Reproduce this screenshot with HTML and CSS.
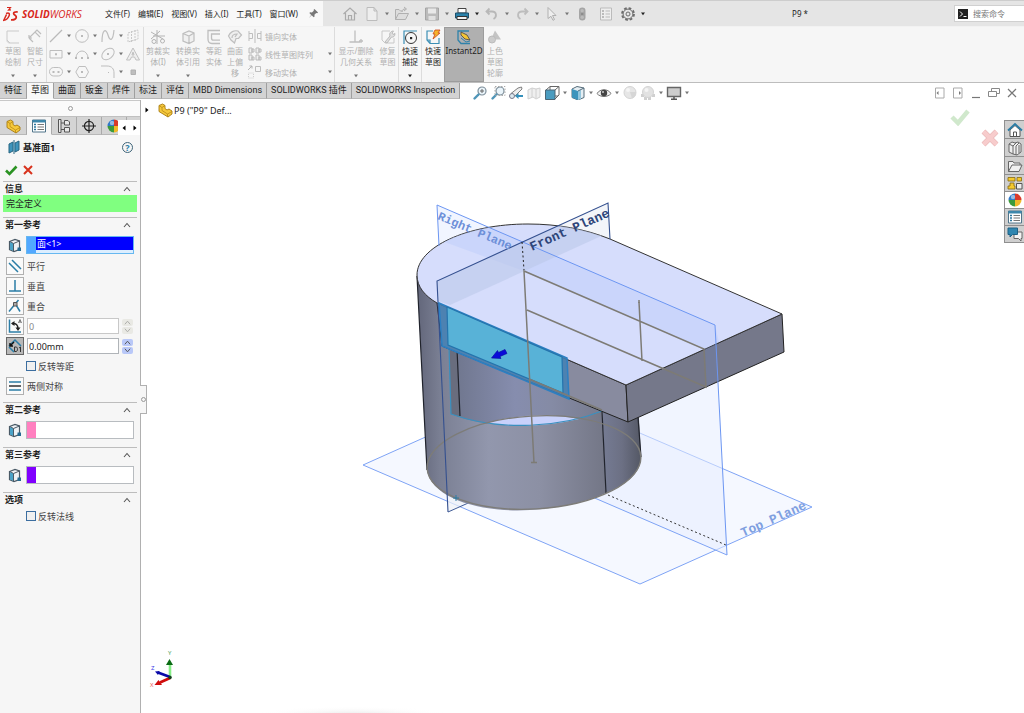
FILE: index.html
```html
<!DOCTYPE html>
<html lang="zh-CN">
<head>
<meta charset="utf-8">
<title>SOLIDWORKS - P9</title>
<link rel="stylesheet" href="styles.css">
</head>
<body>
<svg class="defs" aria-hidden="true">
  <symbol id="dn" viewBox="0 0 6 4"><path d="M1 .5h4L3 3.2z" fill="currentColor"/></symbol>
  <symbol id="chev" viewBox="0 0 10 8"><path d="M2 6l3-3.5L8 6" fill="none" stroke="#555" stroke-width="1.1"/></symbol>
  <symbol id="ref" viewBox="0 0 16 16"><path d="M2.500 4.500L8 2.500l4.500 1.500v8.500L7 14.500 2.500 12.500z" fill="#eef2f5" stroke="#4a5a66" stroke-width="1.200"/><path d="M3 5L6.500 6.500V14L3 12.500z" fill="#4aa3c8"/><path d="M3 4.500L6.500 6.500l6-2.500M6.500 6.500v8" stroke="#4a5a66" fill="none"/><path d="M10.500 10.500h3.500v3.500h-3.500z" fill="#256a90"/></symbol>
  <symbol id="part" viewBox="0 0 16 16"><path d="M2 3.500L5.500 2l2.500 1.500v3L10 8l2-1 3 2v3l-4 3-9-5.500z" fill="#f6c93c" stroke="#a67a10" stroke-width=".9"/><path d="M2 3.500l3 2v3l5.500 3.500L15 9.500M10.500 12v3M5 5.500l3-2" fill="none" stroke="#b98a18" stroke-width=".8"/></symbol>
  <symbol id="ball" viewBox="0 0 16 16"><path d="M8 8V1.500A6.500 6.500 0 0 0 1.500 8z" fill="#2f78c8"/><path d="M8 8V1.500A6.500 6.500 0 0 1 14.500 8z" fill="#d93a2b"/><path d="M8 8H1.500A6.500 6.500 0 0 0 8 14.500z" fill="#3c9a3c"/><path d="M8 8h6.500A6.500 6.500 0 0 1 8 14.500z" fill="#f0b92a"/><circle cx="6" cy="5" r="2.200" fill="#fff" opacity=".5"/></symbol>
  <symbol id="list" viewBox="0 0 16 16"><path d="M1.500 2h13v12h-13z" fill="#fff" stroke="#51758a"/><path d="M1.500 2h13v2.500h-13z" fill="#3d87ab"/><path d="M3 6.500h2M3 9h2M3 11.500h2" stroke="#2c78a0" stroke-width="1.6"/><path d="M6.500 6.500H13M6.500 9H13M6.500 11.500H13" stroke="#777"/></symbol>
  <symbol id="glass" viewBox="0 0 16 16"><circle cx="10" cy="6" r="4" fill="#eaf4fa" stroke="#7d8e99" stroke-width="1.200"/><path d="M6.500 9.500l-4 4" stroke="#4f95b8" stroke-width="2.400" stroke-linecap="round"/></symbol>
</svg>

<header class="titlebar">
  <div class="brandbar">
    <svg class="mark" viewBox="0 0 16 16" fill="none" stroke="#d8271c"><path d="M4 1.500h3.500L5.500 4 8 3.800" stroke-width="1.200"/><path d="M3 7.500c3-1 4 0 3 2.500S3 14 .8 14.300L3.500 8.500" stroke-width="1.500"/><path d="M14.800 6c-3-.3-4.800.5-4 2s3 1.500 2.500 3.500-2.500 2.600-5.300 2.400" stroke-width="1.700"/></svg>
    <span class="brand"><b>SOLID</b>WORKS</span>
    <nav class="menu" aria-label="菜单">
      <button>文件(F)</button><button>编辑(E)</button><button>视图(V)</button><button>插入(I)</button><button>工具(T)</button><button>窗口(W)</button>
    </nav>
    <svg class="pin" viewBox="0 0 12 12"><path d="M7 1l4 4-1 .6-1-.2-2 2 .2 2-1 .8L4 8l-3 3 2.500-3.500L1.500 5.500l.8-.8 2 .2 2-2L6.200 2z" fill="#777"/></svg>
  </div>
  <div class="quick">
    <button aria-label="主页"><svg class="ic" viewBox="0 0 16 16"><path d="M1.500 8L8 2l6.500 6M3.500 7v7h9V7M6.500 14V9.500h3V14" fill="none" stroke="#aaa" stroke-width="1.200"/></svg></button>
    <button class="drop first" aria-label="新建"><svg class="ic" viewBox="0 0 16 16"><path d="M3 1.500h7L13 5v9.500H3zM10 1.500V5h3" fill="#eee" stroke="#bcbcbc"/></svg><svg class="dn"><use href="#dn"/></svg></button>
    <button class="drop" aria-label="打开"><svg class="ic" viewBox="0 0 16 16"><path d="M1.500 13.500v-10H5L6.500 5h2M1.500 13.500l3-6h10l-3 6zM8 6c0-2.500 1.500-3 3.500-3M10 1l2.500 2L10 5" fill="#ddd" stroke="#b0b0b0"/></svg><svg class="dn"><use href="#dn"/></svg></button>
    <button class="drop" aria-label="保存"><svg class="ic" viewBox="0 0 16 16"><path d="M1.500 2h13v12h-13z" fill="#bbb" stroke="#a5a5a5"/><path d="M4 2.500h8v5H4z" fill="#e8e8e8"/><path d="M4.500 10h7v4h-7z" fill="#e0e0e0"/></svg><svg class="dn"><use href="#dn"/></svg></button>
    <button class="drop on" aria-label="打印"><svg class="ic" viewBox="0 0 16 16"><path d="M4 2.500h8V7H4z" fill="#fff" stroke="#444"/><path d="M1.500 7h13v5h-13z" fill="#2a82ab" stroke="#1d4f6b"/><path d="M3 10.500h10v3H3z" fill="#f4f4f4" stroke="#333"/></svg><svg class="dn"><use href="#dn"/></svg></button>
    <button class="drop" aria-label="撤消"><svg class="ic" viewBox="0 0 16 16"><path d="M5.500 2.500L2.500 5.500l3 3M3 5.500h5c5 0 5 5.500 1.500 7.500" fill="none" stroke="#b8b8b8" stroke-width="1.800"/></svg><svg class="dn"><use href="#dn"/></svg></button>
    <button class="drop" aria-label="重做"><svg class="ic" viewBox="0 0 16 16"><path d="M10.500 2.500l3 3-3 3M13 5.500H8c-5 0-5 5.500-1.500 7.500" fill="none" stroke="#bdbdbd" stroke-width="1.800"/></svg><svg class="dn"><use href="#dn"/></svg></button>
    <button class="drop" aria-label="选择"><svg class="ic" viewBox="0 0 16 16"><path d="M4 1.500l8 8H8.500l2 4-1.500.8-2-4L4 12.500z" fill="#eee" stroke="#b0b0b0"/></svg><svg class="dn"><use href="#dn"/></svg></button>
    <button aria-label="重建模型"><svg class="ic" viewBox="0 0 16 16"><rect x="5" y="1.500" width="6.500" height="13" rx="3.200" fill="#a5a5a5"/><circle cx="8.200" cy="4.700" r="1.700" fill="#bbb"/><circle cx="8.200" cy="8" r="1.300" fill="#8c8c8c"/><circle cx="8.200" cy="11.300" r="1.700" fill="#bbb"/></svg></button>
    <button class="apart" aria-label="文件属性"><svg class="ic" viewBox="0 0 16 16"><path d="M2.500 2h11v12h-11z" fill="#eee" stroke="#bbb"/><path d="M4 4h2v2H4zM4 7h2v2H4zM4 10h2v2H4z" fill="#bbb"/><path d="M7.500 5H12M7.500 8H12M7.500 11H12" stroke="#bbb"/></svg></button>
    <button class="drop on first" aria-label="选项"><svg class="ic" viewBox="0 0 16 16" fill="none" stroke="#6c6c6c"><circle cx="8" cy="8" r="6" stroke-width="1.800" stroke-dasharray="2.700 2"/><circle cx="8" cy="8" r="4.900"/><circle cx="8" cy="8" r="2"/></svg><svg class="dn"><use href="#dn"/></svg></button>
  </div>
  <div class="doctitle">P9 *</div>
  <label class="search"><svg class="cmd" viewBox="0 0 12 12"><path d="M1 1h10v10H1z" fill="#222"/><path d="M3 3.500L5.500 6 3 8.500M6.500 8.500h3" stroke="#fff" fill="none"/></svg><input type="text" placeholder="搜索命令" aria-label="搜索命令"></label>
</header>

<section class="ribbon" aria-label="草图工具">
  <div class="group lead">
    <button class="tool w22"><svg class="ic" viewBox="0 0 16 16"><path d="M14 2H2v9l3 3h9M2 11c0 2 1 3 3 3" fill="none" stroke="#c4c4c4"/></svg><span>草图<br>绘制</span><svg class="dn"><use href="#dn"/></svg></button>
    <button class="tool w22"><svg class="ic" viewBox="0 0 16 16"><path d="M2 9l6-6 5 5M2 9l4 4M8 3l2-2 4 4M2 9V6M2 9h3" fill="none" stroke="#b5b5b5" stroke-width="1.200"/></svg><span>智能<br>尺寸</span><svg class="dn"><use href="#dn"/></svg></button>
  </div>
  <div class="group shapes">
    <button class="shape" aria-label="直线"><svg class="ic" viewBox="0 0 16 16"><path d="M2 14L14 2" stroke="#b0b0b0" stroke-width="1.300"/></svg><svg class="dn"><use href="#dn"/></svg></button>
    <button class="shape" aria-label="圆"><svg class="ic" viewBox="0 0 16 16"><circle cx="8" cy="8" r="6.300" fill="none" stroke="#b5b5b5"/><path d="M7 7h2v2H7z" fill="#b0b0b0"/></svg><svg class="dn"><use href="#dn"/></svg></button>
    <button class="shape" aria-label="样条曲线"><svg class="ic" viewBox="0 0 16 16"><path d="M2 14C2 1 6 0 8 7s5 6 6-5" fill="none" stroke="#b5b5b5" stroke-width="1.200"/></svg><svg class="dn"><use href="#dn"/></svg></button>
    <button class="shape" aria-label="基准面"><svg class="ic" viewBox="0 0 16 16"><path d="M3 5l10-3v9L3 14zM6.500 3v12M10 2v12" fill="none" stroke="#c0c0c0" stroke-dasharray="2 1"/></svg></button>
    <button class="shape" aria-label="矩形"><svg class="ic" viewBox="0 0 16 16"><path d="M2 4.500h12v7.500H2z" fill="none" stroke="#b5b5b5"/><path d="M7 7.200h2v2H7z" fill="#b0b0b0"/></svg><svg class="dn"><use href="#dn"/></svg></button>
    <button class="shape" aria-label="圆弧"><svg class="ic" viewBox="0 0 16 16"><path d="M2 12a6 7 0 0 1 12 0" fill="none" stroke="#b5b5b5"/><path d="M1 11h2v2H1zM7 11h2v2H7zM13 11h2v2h-2z" fill="#b0b0b0"/></svg><svg class="dn"><use href="#dn"/></svg></button>
    <button class="shape" aria-label="椭圆"><svg class="ic" viewBox="0 0 16 16"><ellipse cx="8" cy="8" rx="7" ry="4.800" transform="rotate(-40 8 8)" fill="none" stroke="#b5b5b5"/><path d="M7 7h2v2H7z" fill="#b0b0b0"/></svg><svg class="dn"><use href="#dn"/></svg></button>
    <button class="shape" aria-label="文字"><svg class="ic" viewBox="0 0 16 16"><path d="M1.500 14L8 2l6.500 12h-3.500L9.500 11h-3L5 14zM7 9h2L8 6z" fill="#eee" stroke="#b8b8b8"/></svg></button>
    <button class="shape" aria-label="槽口"><svg class="ic" viewBox="0 0 16 16"><rect x="1.500" y="3.500" width="13" height="8.500" rx="4.200" fill="none" stroke="#b5b5b5"/><path d="M4.500 7h2v2h-2zM9.500 7h2v2h-2z" fill="#b0b0b0"/></svg><svg class="dn"><use href="#dn"/></svg></button>
    <button class="shape" aria-label="多边形"><svg class="ic" viewBox="0 0 16 16"><path d="M5 2.500h6.500L14.500 8l-3 5.500H5L1.800 8z" fill="none" stroke="#b5b5b5"/><path d="M7 7h2v2H7z" fill="#b0b0b0"/></svg></button>
    <button class="shape" aria-label="圆角"><svg class="ic" viewBox="0 0 16 16"><path d="M1 2h6c5 0 7 3 7 7v5" fill="none" stroke="#b5b5b5"/><path d="M8 8h1v1H8z" fill="#b0b0b0"/></svg><svg class="dn"><use href="#dn"/></svg></button>
    <button class="shape" aria-label="点"><svg class="ic" viewBox="0 0 16 16"><path d="M6 6h4.500v4.500H6z" fill="#b5b5b5" stroke="#a5a5a5"/></svg></button>
  </div>
  <div class="group">
    <button class="tool w28"><svg class="ic" viewBox="0 0 16 16" fill="none" stroke="#aaa"><path d="M1 3l12 7M1 10l9-8M7 1v14M3 7h12" /><circle cx="4" cy="12.500" r="2"/><circle cx="12.500" cy="12" r="2"/></svg><span>剪裁实<br>体(I)</span><svg class="dn"><use href="#dn"/></svg></button>
    <button class="tool w32"><svg class="ic" viewBox="0 0 16 16"><path d="M3 4.500L9 2l5 2v8l-5 2.500-6-2.500zM3 4.500l6 2.500 5-3M9 7v7" fill="#f0f0f0" stroke="#b5b5b5" stroke-width="1.200"/></svg><span>转换实<br>体引用</span><svg class="dn"><use href="#dn"/></svg></button>
    <button class="tool w20"><svg class="ic" viewBox="0 0 16 16"><path d="M14 1.500H2V10c0 3 1 4.500 4 4.500h8M14 5H5.500v4c0 1.500.5 2.200 2 2.200H14" fill="none" stroke="#b5b5b5" stroke-width="1.300"/></svg><span>等距<br>实体</span></button>
    <button class="tool w22"><svg class="ic" viewBox="0 0 16 16"><path d="M1.500 7C3 3 7 1 11 2l3.500 4-3 3.500H9L7.500 14 4 11zM5 9c0-3 2-4 5-4l-2 3" fill="#eee" stroke="#b5b5b5" stroke-width="1.200"/></svg><span>曲面<br>上偏<br>移</span></button>
    <div class="stack">
      <button><svg class="ic" viewBox="0 0 16 16"><path d="M2 3v10M2 5.500h3.500v5H2M14 3v10M14 5.500h-3.500v5H14M8 1v14" fill="none" stroke="#b5b5b5"/></svg><span>镜向实体</span></button>
      <button><svg class="ic" viewBox="0 0 16 16"><path d="M2 2h3v5H2zM9 2h3v5H9zM2 9h3v5H2zM9 9h3v5H9zM5 3h2v3H5zM12 3h2v3h-2zM5 11h2v3H5zM12 11h2v3h-2z" fill="#eee" stroke="#b0b0b0"/></svg><span>线性草图阵列</span><svg class="dn"><use href="#dn"/></svg></button>
      <button><svg class="ic" viewBox="0 0 16 16"><path d="M8.500 2.500h5v5h-5z" fill="none" stroke="#b5b5b5"/><path d="M1.500 9h5v5h-5z" fill="none" stroke="#c8c8c8" stroke-dasharray="1 1"/><path d="M1 6l4-4M2.500 2H5v2.500" stroke="#aaa" fill="none"/></svg><span>移动实体</span><svg class="dn"><use href="#dn"/></svg></button>
    </div>
  </div>
  <div class="group">
    <button class="tool w42"><svg class="ic" viewBox="0 0 16 16"><path d="M7 1.500V13M1.500 13H12M11 12h4M13 10v4" fill="none" stroke="#b5b5b5" stroke-width="1.300"/></svg><span>显示/删除<br>几何关系</span><svg class="dn"><use href="#dn"/></svg></button>
    <button class="tool w21"><svg class="ic" viewBox="0 0 16 16"><path d="M10 2H2v9l3 3h9V9" fill="none" stroke="#c0c0c0"/><path d="M5 13l5-6c-1-3 1-5 3.500-5L12 4l1 1.500 2-1c0 3-2 4-3.500 3.500L7 14z" fill="#ddd" stroke="#b0b0b0"/></svg><span>修复<br>草图</span></button>
  </div>
  <div class="group live">
    <button class="tool w22"><svg class="ic" viewBox="0 0 16 16" fill="none"><path d="M2 15V2h13" stroke="#3d8fb5" stroke-width="1.200"/><circle cx="9" cy="9" r="5.500" stroke="#333"/><path d="M8 8h2.200v2.200H8z" fill="#222"/></svg><span>快速<br>捕捉</span><svg class="dn"><use href="#dn"/></svg></button>
  </div>
  <div class="group live last">
    <button class="tool w22"><svg class="ic" viewBox="0 0 16 16"><path d="M8 2H2v9l3 3.500h9V9M2 11h3v3" fill="none" stroke="#3d8fb5" stroke-width="1.200"/><path d="M10 1h5l-2 3h2L8 10l2-5H8z" fill="#f5b52c" stroke="#c9481e" stroke-width=".8"/></svg><span>快速<br>草图</span></button>
    <button class="tool w40 pressed"><svg class="ic" viewBox="0 0 16 16"><path d="M13 2H2v9l3 3.500h9" fill="none" stroke="#2f82aa" stroke-width="1.300"/><path d="M5 9l5 4 4-1" stroke="#2f82aa" fill="none"/><path d="M5 3l6 3 3 5-5-1-4-4z" fill="#f3c534" stroke="#444" stroke-width=".8"/></svg><span>Instant2D</span></button>
    <button class="tool w22 off"><svg class="ic" viewBox="0 0 16 16"><path d="M8 1.500l6 9H4z" fill="#c4c4c4"/><circle cx="5" cy="10.500" r="3.500" fill="#ccc" stroke="#bbb"/></svg><span>上色<br>草图<br>轮廓</span></button>
  </div>
</section>

<div class="tabrow">
  <nav class="tabs" aria-label="命令管理器">
    <button>特征</button><button class="active">草图</button><button>曲面</button><button>钣金</button><button>焊件</button><button>标注</button><button>评估</button><button>MBD Dimensions</button><button>SOLIDWORKS 插件</button><button>SOLIDWORKS Inspection</button>
  </nav>
  <div class="hud">
    <button aria-label="整屏显示"><svg class="ic" viewBox="0 0 16 16"><use href="#glass"/><path d="M8 6h4M10 4v4" stroke="#666"/></svg></button>
    <button aria-label="局部放大"><svg class="ic" viewBox="0 0 16 16"><use href="#glass"/><path d="M5 1.500h10v9H5z" fill="none" stroke="#aaa" stroke-dasharray="1.500 1.500"/></svg></button>
    <button aria-label="上一视图"><svg class="ic" viewBox="0 0 16 16"><path d="M3 8.500L10 3l3.500-1 .5 2-7 7" fill="#eee" stroke="#808080"/><circle cx="4" cy="11" r="2.500" fill="#dce9f0" stroke="#778"/><path d="M15 10H10.500V8L7 11l3.500 3v-2H15z" fill="#3590bb"/></svg></button>
    <button aria-label="剖面视图"><svg class="ic" viewBox="0 0 16 16"><path d="M2 5l4-2 4 1 4-1v9l-4 2-3-2-5 2z" fill="#efefef" stroke="#d0d0d0"/><path d="M6 3v9M10 4v9" stroke="#d0d0d0"/></svg></button>
    <button class="hdrop" aria-label="视图定向"><svg class="ic" viewBox="0 0 16 16"><path d="M2 5l4-3.500h9V10l-4 4M11 5l4-3.500M6 2v9h8" fill="none" stroke="#666"/><path d="M1.500 5H11v9.500H1.500z" fill="#4a9cc0" stroke="#4b6676"/></svg><svg class="dn"><use href="#dn"/></svg></button>
    <button class="hdrop" aria-label="显示样式"><svg class="ic" viewBox="0 0 16 16"><path d="M2 4l5-2.500L14 3v9.500L8 15l-6-2.500z" fill="#e5eef3" stroke="#556c7a"/><path d="M2 4l6 2v9l-6-2.500z" fill="#3d94bc"/><path d="M8 6l3-1v9l-3 1z" fill="#93c6dd"/><path d="M8 6l6-3" stroke="#556c7a"/></svg><svg class="dn"><use href="#dn"/></svg></button>
    <button class="hdrop" aria-label="隐藏/显示项目"><svg class="ic" viewBox="0 0 16 16"><path d="M1 8.500C4 3.500 12 3.500 15 8.500c-3 4-11 4-14 0z" fill="#f2f2f2" stroke="#777"/><circle cx="8" cy="8" r="3.200" fill="#444"/><circle cx="7" cy="7" r="1" fill="#ccc"/></svg><svg class="dn"><use href="#dn"/></svg></button>
    <button aria-label="编辑外观"><svg class="ic" viewBox="0 0 16 16"><circle cx="8" cy="7.500" r="6" fill="#e6e6e6" stroke="#d4d4d4"/><path d="M8 7l6 0a6 6 0 0 1-4 6.500z" fill="#d6d6d6"/><circle cx="6" cy="5" r="2" fill="#f5f5f5"/></svg></button>
    <button class="hdrop" aria-label="应用布景"><svg class="ic" viewBox="0 0 16 16"><path d="M1 9h3v3H1zM4 12h3v3H4zM8 12h3v3H8zM12 9h3v3h-3z" fill="#d0d0d0"/><circle cx="8" cy="7" r="5.500" fill="#e2e2e2" stroke="#d4d4d4"/><circle cx="6.500" cy="5" r="2" fill="#f4f4f4"/></svg><svg class="dn"><use href="#dn"/></svg></button>
    <button class="hdrop" aria-label="视图设定"><svg class="ic" viewBox="0 0 16 16"><path d="M1.500 2.500h13v9h-13z" fill="#cdcdcd" stroke="#666" stroke-width="1.400"/><path d="M8 12v2M5 14.200h6" stroke="#555" stroke-width="1.500"/></svg><svg class="dn"><use href="#dn"/></svg></button>
  </div>
  <div class="winbtns">
    <button aria-label="左移"><svg class="ic" viewBox="0 0 16 16"><path d="M3.500 3h8.500v10H3.500z" fill="none" stroke="#aaa"/><path d="M6.500 6v4L4.500 8z" fill="#777"/></svg></button>
    <button aria-label="右移"><svg class="ic" viewBox="0 0 16 16"><path d="M3.500 3h8.500v10H3.500z" fill="none" stroke="#aaa"/><path d="M9 6v4l2-2z" fill="#777"/></svg></button>
    <button aria-label="最小化"><svg class="ic" viewBox="0 0 16 16"><path d="M4 12.500h8" stroke="#777" stroke-width="1.200"/></svg></button>
    <button aria-label="还原"><svg class="ic" viewBox="0 0 16 16"><path d="M5.500 6V3.500h8v5H11M2.500 6.500h8v5h-8z" fill="none" stroke="#888"/></svg></button>
    <button aria-label="关闭"><svg class="ic" viewBox="0 0 16 16"><path d="M4 4l8 8M12 4l-8 8" stroke="#777" stroke-width="1.200"/></svg></button>
  </div>
</div>

<main class="work">
  <aside class="panel">
    <div class="grip"><i class="knob"></i></div>
    <div class="ptabs">
      <button aria-label="特征树"><svg class="ic" viewBox="0 0 16 16"><use href="#part"/></svg></button>
      <button class="active" aria-label="属性"><svg class="ic" viewBox="0 0 16 16"><use href="#list"/></svg></button>
      <button aria-label="配置"><svg class="ic" viewBox="0 0 16 16" fill="#e8e8e8" stroke="#555"><path d="M2.500 1.500h2.500v13H2.500zM8.500 2.500h3.500L13.500 4v3h-5zM8.500 9.500h5v4.500h-5z"/><path d="M5 5h3M5 11.500h3" fill="none"/></svg></button>
      <button aria-label="标注管理"><svg class="ic" viewBox="0 0 16 16" fill="none" stroke="#222" stroke-width="1.200"><circle cx="8" cy="8" r="4.600"/><path d="M8 1v14M1 8h14"/></svg></button>
      <button aria-label="外观"><svg class="ic" viewBox="0 0 16 16"><use href="#ball"/></svg></button>
      <div class="pscroll"><button aria-label="向左"><svg viewBox="0 0 6 6"><path d="M4.500.5v5L1.500 3z"/></svg></button><button aria-label="向右"><svg viewBox="0 0 6 6"><path d="M1.500.5v5L4.500 3z"/></svg></button></div>
    </div>
    <div class="phead">
      <svg class="ic" viewBox="0 0 16 16"><path d="M3 5l4-2v9l-4 2zM9 4l4-2v9l-4 2z" fill="#3d94bc" stroke="#276481"/><path d="M7 3l2 1v9l-2-1z" fill="#8fc3da"/><path d="M8 1v14" stroke="#276481"/></svg>
      <h1>基准面1</h1>
      <button class="help" aria-label="帮助">?</button>
    </div>
    <div class="pact">
      <button aria-label="确定"><svg class="ic" viewBox="0 0 16 16"><path d="M3 8.500l3.500 3.500L13.500 4.500" fill="none" stroke="#2a9222" stroke-width="2.600"/></svg></button>
      <button aria-label="取消"><svg class="ic" viewBox="0 0 16 16"><path d="M4 4l8 8M12 4l-8 8" stroke="#d8321c" stroke-width="2"/></svg></button>
    </div>
    <section class="sec">
      <button class="shead"><span>信息</span><svg><use href="#chev"/></svg></button>
      <p class="msg">完全定义</p>
    </section>
    <section class="sec">
      <button class="shead"><span>第一参考</span><svg><use href="#chev"/></svg></button>
      <div class="frow"><svg class="ic"><use href="#ref"/></svg><div class="pick lit"><input type="text" readonly value="面&lt;1&gt;" aria-label="第一参考"></div></div>
      <div class="row"><button class="rel" id="r1" aria-labelledby="l1"><svg class="ic" viewBox="0 0 16 16"><path d="M2 5l9 9M5 2l9 9" stroke="#2b7da6" stroke-width="1.500"/></svg></button><label id="l1" for="r1">平行</label></div>
      <div class="row"><button class="rel" id="r2" aria-labelledby="l2"><svg class="ic" viewBox="0 0 16 16"><path d="M8 2v11M2 13h12" stroke="#2b7da6" stroke-width="1.500"/></svg></button><label id="l2" for="r2">垂直</label></div>
      <div class="row"><button class="rel" id="r3" aria-labelledby="l3"><svg class="ic" viewBox="0 0 16 16"><path d="M2 13.500L11.500 2M8.500 6l4.500 7.500" fill="none" stroke="#2b7da6" stroke-width="1.500"/><path d="M6.500 4.500H10V8H6.500z" fill="#aaa" stroke="#555"/></svg></button><label id="l3" for="r3">重合</label></div>
      <div class="row"><button class="rel" aria-label="角度"><svg class="ic" viewBox="0 0 16 16"><path d="M2.500 1.500V14H14" fill="none" stroke="#2b7da6" stroke-width="1.500"/><path d="M5 5.500c4-.5 6 1.500 6 5" fill="none" stroke="#222" stroke-width="1.500"/><path d="M4 5.500L7.500 3v5zM11 13L8.500 9.500h5z" fill="#222"/><path d="M11.500 5L13 1.500 14.500 5M12 4h2" fill="none" stroke="#555" stroke-width=".8"/></svg></button><input class="num" type="text" value="0" disabled aria-label="角度"><div class="spin dim"><button disabled aria-label="增加角度"><svg><use href="#chev"/></svg></button><button disabled aria-label="减少角度"><svg><use href="#chev"/></svg></button></div></div>
      <div class="row"><button class="rel down" aria-label="偏移距离"><svg class="ic" viewBox="0 0 16 16"><path d="M2 9l5 5M2 8l6-6 6 6" fill="none" stroke="#2b7da6" stroke-width="1.500"/><path d="M3 8l4-4M3 5v3h3" fill="none" stroke="#111" stroke-width="1.400"/><path d="M7.500 9h1.500c2 0 2 4.500 0 4.500H7.500zM12 10l1.500-1v5" fill="none" stroke="#333"/></svg></button><input class="num" type="text" value="0.00mm" aria-label="偏移距离"><div class="spin"><button aria-label="增加距离"><svg><use href="#chev"/></svg></button><button aria-label="减少距离"><svg><use href="#chev"/></svg></button></div></div>
      <div class="row check"><input type="checkbox" id="c1"><label for="c1">反转等距</label></div>
      <div class="row"><button class="rel" id="r4" aria-labelledby="l4"><svg class="ic" viewBox="0 0 16 16"><path d="M2 4h12M2 12h12" stroke="#2b7da6" stroke-width="1.400"/><path d="M2 8h12" stroke="#222" stroke-width="1.400"/></svg></button><label id="l4" for="r4">两侧对称</label></div>
    </section>
    <section class="sec">
      <button class="shead"><span>第二参考</span><svg><use href="#chev"/></svg></button>
      <div class="frow"><svg class="ic"><use href="#ref"/></svg><div class="pick pink"><input type="text" readonly aria-label="第二参考"></div></div>
    </section>
    <section class="sec">
      <button class="shead"><span>第三参考</span><svg><use href="#chev"/></svg></button>
      <div class="frow"><svg class="ic"><use href="#ref"/></svg><div class="pick violet"><input type="text" readonly aria-label="第三参考"></div></div>
    </section>
    <section class="sec">
      <button class="shead"><span>选项</span><svg><use href="#chev"/></svg></button>
      <div class="row check"><input type="checkbox" id="c2"><label for="c2">反转法线</label></div>
    </section>
    <button class="splitter" aria-label="折叠面板"><i class="knob"></i></button>
  </aside>

  <div class="view">
    <svg class="scene" viewBox="141 100 883 613" role="img" aria-label="P9 零件模型">
      <defs>
        <linearGradient id="outer" gradientUnits="userSpaceOnUse" x1="417" y1="0" x2="606" y2="0"><stop offset="0" stop-color="#62667a"/><stop offset=".12" stop-color="#7a7f93"/><stop offset=".38" stop-color="#9297ad"/><stop offset=".65" stop-color="#8c90a4"/><stop offset="1" stop-color="#737686"/></linearGradient>
        <linearGradient id="side" gradientUnits="userSpaceOnUse" x1="603" y1="0" x2="641" y2="0"><stop offset="0" stop-color="#757b93"/><stop offset=".5" stop-color="#6c7084"/><stop offset="1" stop-color="#545865"/></linearGradient>
        <linearGradient id="inner" gradientUnits="userSpaceOnUse" x1="457" y1="0" x2="602" y2="0"><stop offset="0" stop-color="#70778f"/><stop offset=".4" stop-color="#868dae"/><stop offset=".65" stop-color="#858ba5"/><stop offset="1" stop-color="#777b8e"/></linearGradient>
        <radialGradient id="haze"><stop offset="0" stop-color="#e6e6e6"/><stop offset="1" stop-color="#fff" stop-opacity="0"/></radialGradient>
        <clipPath id="topclip"><path d="M437 303C425 296 417 287 417 275C417 247 467 224 528 224C558 224 585 229 610 239L781 314 626 385Z"/></clipPath>
      </defs>
      <ellipse cx="352" cy="715" rx="98" ry="9" fill="url(#haze)"/>
      <path d="M363 465L640 584 812 507 535 388Z" fill="#f5f8ff" stroke="#7ea3f5"/>
      <path d="M437 205L715 325 727 555 449 436Z" fill="#e6edff" fill-opacity=".55"/>
      <path d="M437 281L608 203 620 433 448 512Z" fill="#eef1f6" fill-opacity=".7"/>
      <path d="M448 512L475 500" stroke="#3f5a96"/>
      <path d="M727 555L590 496" stroke="#7ea3f5"/>
      <path d="M608 495L726 545" stroke="#333" stroke-dasharray="2 2.500"/>
      <path d="M417 275L427 470C431 498 480 513 530 510C560 508 588 502 606 493L602 405Z" fill="url(#outer)"/>
      <path d="M602 405L606 493C628 484 641 472 641 457L638 400Z" fill="url(#side)"/>
      <path d="M449 346L451 414C500 434 570 426 602 411L569 398Z" fill="url(#inner)"/>
      <path d="M449 346L451 414 460 417 457 349Z" fill="#696d7e"/>
      <path d="M457 349L460 416M602 411L606 493M638 417L641 457M417 276L427 470" fill="none" stroke="#20232c" stroke-width="1.200"/>
      <path d="M487 423Q532 410 579 419Q532 430 487 423Z" fill="#c8d1fb"/>
      <path d="M449 347L451 414C500 432 562 427 602 411" fill="none" stroke="#3a90bf" stroke-width="1.200"/>
      <ellipse cx="534" cy="462.500" rx="107" ry="46.500" transform="rotate(-3.300 534 462.500)" fill="none" stroke="#7d7c78" stroke-width="1.400"/>
      <path d="M437 303L626 385 628 422 442 346Z" fill="#888b9f" stroke="#222"/>
      <path d="M626 385L782 314 784 352 628 422Z" fill="#75788a" stroke="#222"/>
      <path d="M437 303C425 296 417 287 417 275C417 247 467 224 528 224C558 224 585 229 610 239L782 314 626 385Z" fill="#d6ddfc" stroke="#333"/>
      <g clip-path="url(#topclip)">
        <path d="M437 205L715 325 719 342 705 349 524 271 439 240Z" fill="#b9cafb" opacity=".4"/>
        <path d="M437 281L608 203 610 232 450 305 438 301Z" fill="#b9c7e8" opacity=".55"/>
      </g>
      <path d="M705 349L716 344 718 380 706 387Z" fill="#6f7fa8" opacity=".45"/>
      <path d="M439 246L437 205 715 325 727 555" fill="none" stroke="#6c96f2"/>
      <path d="M448 512L437 281 608 203 610 239" fill="none" stroke="#34508f" stroke-width="1.100"/>
      <path d="M439 303L567 358 569 399 442 346Z" fill="#4380b4" fill-opacity=".85" stroke="#2c7fc2" stroke-width="1.500"/>
      <path d="M447 307L562 357 563 393 448 345Z" fill="#58b2d7" stroke="#2474ad" stroke-width="1.200"/>
      <g fill="none" stroke="#7d7b75" stroke-width="1.500">
        <path d="M534 463L524 271 704 349 706 387 527 310M639 302L642 361M529 379L602 410"/>
        <path d="M531 462.500h6M639 300v3"/>
      </g>
      <path d="M522 242L524 270" stroke="#222" stroke-dasharray="2 2.500"/>
      <path d="M453 498h6M456 495v6" stroke="#2b7da6"/>
      <path d="M505 349.500l2 4-7 3 1 2-9.500-.5 6-7.500 1 2z" fill="#0a0ad8" stroke="#0606a0" stroke-width=".6"/>
      <g class="ptext">
        <text class="far" transform="translate(437 219) rotate(23)" fill="#6d8fd8">Right Plane</text>
        <text transform="translate(532 251) rotate(-24)" fill="#2d4478">Front Plane</text>
        <text transform="translate(743 537) rotate(-24)" fill="#7f9fe0">Top Plane</text>
      </g>
      <path d="M170 677V664" stroke="#86ee86" stroke-width="2.600"/><path d="M169.500 659l3.500 6h-7z" fill="#0a6a14"/>
      <path d="M170 677L158 672.500" stroke="#0a0aa8" stroke-width="2.600"/><path d="M155 671.500l4.500-.5-1.500 4z" fill="#0a0aa8"/>
      <path d="M170 678L160 682.500" stroke="#d00c0c" stroke-width="3"/><path d="M154.500 685l4-5 3.500 5z" fill="#d00c0c"/>
      <circle cx="170" cy="677.500" r="1.800" fill="#123c1c"/>
      <g class="axis"><text x="168" y="655" fill="#4f9f5f">Y</text><text x="151" y="670" fill="#3a3ae8">Z</text><text x="150" y="687" fill="#ee5a5a">X</text></g>
    </svg>
    <div class="tree"><svg class="tri" viewBox="0 0 6 6"><path d="M1.500.5v5L4.500 3z"/></svg><svg class="ic"><use href="#part"/></svg><span>P9 ("P9" Def...</span></div>
    <button class="confirm yes" aria-label="接受"><svg viewBox="0 0 22 18"><path d="M3 9l6 6L19 3" fill="none" stroke="#d0e8cc" stroke-width="4.500"/></svg></button>
    <button class="confirm no" aria-label="放弃"><svg viewBox="0 0 20 20"><path d="M3.500 3.500l13 13M16.500 3.500l-13 13" stroke="#eababa" stroke-width="5.500"/><path d="M3.500 3.500l13 13M16.500 3.500l-13 13" stroke="#f7cccc" stroke-width="4"/></svg></button>
    <nav class="taskpane" aria-label="任务窗格">
      <button aria-label="资源"><svg class="ic" viewBox="0 0 16 16"><path d="M3 8v6.500h10V8L8 3.500z" fill="#fff" stroke="#555"/><path d="M1 8.500L8 2l7 6.500" fill="none" stroke="#2b7da6" stroke-width="1.800"/><path d="M6.500 14.500V10h3v4.500" fill="none" stroke="#555"/></svg></button>
      <button aria-label="设计库"><svg class="ic" viewBox="0 0 16 16"><path d="M2 4l3-2 3 1 3-1 3 2v8l-4 3-4-1-4-2zM2 4l4 2v8M6 6l3-3M9 6v9M9 6l3-3M12 5v8" fill="#eee" stroke="#666"/></svg></button>
      <button aria-label="文件探索器"><svg class="ic" viewBox="0 0 16 16"><path d="M1.500 13.500v-10H6L7 5h6v2M1.500 13.500L5 7h10l-3 6.500z" fill="#f0f0f0" stroke="#666"/></svg></button>
      <button aria-label="视图调色板"><svg class="ic" viewBox="0 0 16 16"><path d="M1 2.500h7V6H1zM10 2.500h4.500V6H10zM3 8h4v3h1v3H1v-3h2z" fill="#f5c92e" stroke="#876b10" stroke-width=".8"/><path d="M9.500 8.500h5.500v5.500H9.500z" fill="#eee" stroke="#555"/></svg></button>
      <button class="active" aria-label="外观、布景"><svg class="ic"><use href="#ball"/></svg></button>
      <button aria-label="自定义属性"><svg class="ic"><use href="#list"/></svg></button>
      <button aria-label="论坛"><svg class="ic" viewBox="0 0 16 16"><path d="M7 6h8v6.500h-1v2.500l-2.500-2.500H7z" fill="#f3f3f3" stroke="#666"/><path d="M1 2h9.500v6.500H5.500L3 11V8.500H1z" fill="#2f86b0" stroke="#1e6286"/></svg></button>
    </nav>
  </div>
</main>
</body>
</html>
```
FILE: styles.css
```css
* { box-sizing: border-box; }
body {
  margin: 0;
  min-height: 100vh;
  display: flex;
  flex-direction: column;
  background: #fff;
  color: #222;
  font: 9px/11px "Noto Sans", "Noto Sans CJK SC", sans-serif;
  overflow-x: hidden;
}
button {
  margin: 0;
  padding: 0;
  border: 0;
  background: none;
  color: inherit;
  font: inherit;
  display: flex;
  align-items: center;
  justify-content: center;
}
input { font: inherit; color: inherit; margin: 0; }
svg { display: block; flex: none; }
.defs { position: absolute; width: 0; height: 0; }
.ic { width: 16px; height: 16px; }
.dn { width: 6px; height: 4px; color: #777; }

/* Title bar */
.titlebar {
  display: flex;
  align-items: stretch;
  height: 27px;
  background: #e5e5e5;
  border-top: 1px solid #cdcdcd;
  border-bottom: 1px solid #f2f2f2;
  font-size: 8px;
}
.brandbar {
  display: flex;
  align-items: center;
  width: 323px;
  padding-left: 3px;
  background: #f8f8f8;
}
.mark { width: 16px; height: 16px; }
.brand {
  width: 62px;
  margin-left: 3px;
  color: #d8271c;
  font: italic 10px/12px "Open Sans", sans-serif;
}
.menu { display: flex; gap: 8px; margin-left: 21px; }
.menu button { white-space: nowrap; }
.pin { width: 11px; height: 11px; margin-left: auto; margin-right: 4px; }
.quick { display: flex; align-items: center; padding-left: 19px; }
.quick .drop { width: 30px; justify-content: flex-start; gap: 4px; }
.quick .first { margin-left: 6px; }
.quick .apart { margin-left: 8px; }
.quick .on .dn { color: #222; }
.doctitle { flex: 1; align-self: center; text-align: center; padding-right: 4px; }
.search {
  display: flex;
  align-items: center;
  gap: 4px;
  width: 70px;
  margin: 4px 0;
  padding-left: 2px;
  background: #fff;
  border: 1px solid #d0d0d0;
  border-right: 0;
}
.cmd { width: 12px; height: 12px; }
.search input { flex: 1; min-width: 0; border: 0; padding: 0; background: none; }
.search input::placeholder { color: #777; opacity: 1; }

/* Ribbon */
.ribbon {
  display: flex;
  height: 56px;
  background: #f6f6f6;
  border-bottom: 1px solid #bdbdbd;
  font-size: 8px;
  color: #b0b0b0;
}
.ribbon .ic { opacity: .85; }
.ribbon .live .ic { opacity: 1; }
.group { display: flex; border-right: 1px solid #dcdcdc; }
.group.last { border-right: 0; }
.lead { padding-left: 2px; }
.live { color: #222; }
.live .dn { color: #222; }
.live .off { color: #b0b0b0; }
.tool {
  flex-direction: column;
  justify-content: flex-start;
  padding: 2px 0 4px;
  white-space: nowrap;
}
.tool .dn { margin-top: auto; }
.w20 { width: 20px; }
.w21 { width: 21px; }
.w22 { width: 22px; }
.w28 { width: 28px; }
.w32 { width: 32px; }
.w40 { width: 40px; }
.w42 { width: 42px; }
.pressed { background: #b0b0b0; border: 1px solid #9c9c9c; padding-top: 1px; }
.shapes {
  display: grid;
  grid-template-columns: 26px 26px 25px 18px;
  grid-template-rows: repeat(3, 18px);
  padding-left: 1px;
}
.shape { justify-content: flex-start; gap: 2px; }
.stack { display: grid; grid-template-rows: repeat(3, 18px); width: 88px; padding: 0 1px; }
.stack button { justify-content: flex-start; gap: 2px; white-space: nowrap; }
.stack .dn { margin-left: auto; }

/* Command tabs and view toolbar */
.tabrow { display: flex; height: 17px; background: #fff; }
.tabs {
  display: flex;
  height: 16px;
  font-family: Roboto, "Noto Sans CJK SC", sans-serif;
}
.tabs button {
  min-width: 27px;
  padding: 0 4px;
  background: #d3d3d3;
  border-right: 1px solid #9f9f9f;
  border-bottom: 1px solid #b8b8b8;
  white-space: nowrap;
}
.tabs .active { background: #f8f8f8; border-bottom-color: #f8f8f8; }
.hud { display: flex; align-items: center; gap: 2px; margin-left: 12px; padding-top: 3px; }
.hdrop { width: 24px; gap: 2px; justify-content: flex-start; }
.winbtns { display: flex; align-items: center; gap: 2px; margin-left: auto; padding: 3px 4px 0 0; }

/* Property panel */
.work { flex: 1; display: flex; }
.panel {
  position: relative;
  width: 141px;
  background: #f6f6f6;
  border-right: 1px solid #b0b0b0;
}
.grip {
  display: flex;
  align-items: center;
  justify-content: center;
  height: 16px;
  background: #fafafa;
  border-top: 1px solid #c8c8c8;
}
.knob { width: 5px; height: 5px; border: 1px solid #999; border-radius: 50%; }
.ptabs { display: flex; height: 19px; background: #d4d4d4; border-top: 1px solid #c0c0c0; }
.ptabs > button { width: 25px; border-right: 1px solid #aaa; border-bottom: 1px solid #b8b8b8; }
.ptabs > button:first-child { width: 27px; }
.ptabs > .active { background: #f6f6f6; border-bottom-color: #f6f6f6; }
.pscroll { position: absolute; top: 20px; right: 0; display: flex; background: #fff; }
.pscroll button { width: 11px; height: 15px; }
.pscroll svg, .tri { width: 6px; height: 6px; }
.phead { display: flex; align-items: center; height: 24px; padding: 0 7px 0 6px; }
.phead h1 { margin: 0 auto 0 1px; font-size: 9px; line-height: 11px; }
.help {
  width: 11px;
  height: 11px;
  border: 1px solid #3f6478;
  border-radius: 50%;
  color: #2b7da6;
  font-weight: bold;
}
.pact { display: flex; gap: 1px; height: 22px; padding-left: 3px; }
.sec { margin: 0 3px; padding-bottom: 6px; border-top: 1px solid #bdbdbd; }
.shead {
  width: 100%;
  height: 13px;
  padding: 0 5px 0 2px;
  justify-content: space-between;
  font-weight: bold;
}
.shead svg { width: 10px; height: 8px; }
.msg { margin: 0 0 -1px; height: 17px; padding: 3px; background: #80ff80; }
.frow { display: flex; align-items: center; gap: 3px; height: 22px; margin-top: 3px; padding: 0 3px 0 4px; }
.pick {
  --mark: #52a8ff;
  --field: #fff;
  flex: 1;
  height: 18px;
  padding-left: 9px;
  border: 1px solid #b8bcc0;
  background: linear-gradient(to right, var(--mark) 9px, var(--field) 9px);
}
.pick input {
  display: block;
  width: 100%;
  height: 100%;
  border: 0;
  padding: 0 1px;
  background: none;
}
.lit { --field: #dceeff; border-color: #66b8f0; padding-bottom: 3px; }
.lit input { background: #00f; color: #fff; }
.pink { --mark: #ff80c0; }
.violet { --mark: #8000ff; }
.row { display: flex; align-items: center; gap: 3px; height: 20px; padding: 0 4px 0 3px; color: #444; }
.rel { width: 18px; height: 18px; border: 1px solid #b0b0b0; background: #fafafa; }
.rel.down { background: #b8b8b8; border-color: #666; }
.num {
  flex: 1;
  min-width: 0;
  height: 16px;
  padding: 0 1px;
  border: 1px solid #b0b4b8;
  background: #fff;
  color: #222;
}
.num:disabled { color: #888; border-color: #c8c8c8; }
.spin { display: flex; flex-direction: column; gap: 1px; width: 11px; }
.spin button { height: 7px; background: #b9c8f8; border-radius: 2px; }
.spin svg { width: 9px; height: 7px; }
.spin button + button svg { transform: rotate(180deg); }
.dim button { background: #e9e9e4; }
.dim svg { opacity: .4; }
.check { padding-left: 23px; gap: 2px; }
.check input {
  appearance: none;
  width: 10px;
  height: 10px;
  border: 1px solid #3c6ea0;
  background: #f0f0f0;
}
.splitter {
  position: absolute;
  z-index: 1;
  top: 285px;
  right: -7px;
  width: 7px;
  height: 29px;
  border: 1px solid #b0b0b0;
  border-left: 0;
  background: #f6f6f6;
}

/* Graphics area */
.view { flex: 1; position: relative; min-width: 0; background: #fff; }
.scene { width: 100%; height: auto; }
.ptext { font: bold 13px "Liberation Mono", monospace; }
.far { font-size: 12px; }
.axis { font: 6px "Noto Sans", sans-serif; }
.tree { position: absolute; top: 2px; left: 3px; display: flex; align-items: center; }
.tree .ic { margin: 0 1px 0 7px; }
.confirm { position: absolute; }
.confirm.yes { top: 8px; right: 53px; }
.confirm.yes svg { width: 22px; height: 18px; }
.confirm.no { top: 28px; right: 24px; }
.confirm.no svg { width: 20px; height: 20px; }
.taskpane {
  position: absolute;
  top: 20px;
  right: 0;
  width: 20px;
  border: 1px solid #8f8f8f;
  border-right: 0;
}
.taskpane button { width: 100%; height: 17px; background: #cfcfcf; }
.taskpane button + button { height: 18px; border-top: 1px solid #8f8f8f; }
.taskpane button:nth-child(n + 4) { height: 17px; }
.taskpane .active { background: #fff; }
```
